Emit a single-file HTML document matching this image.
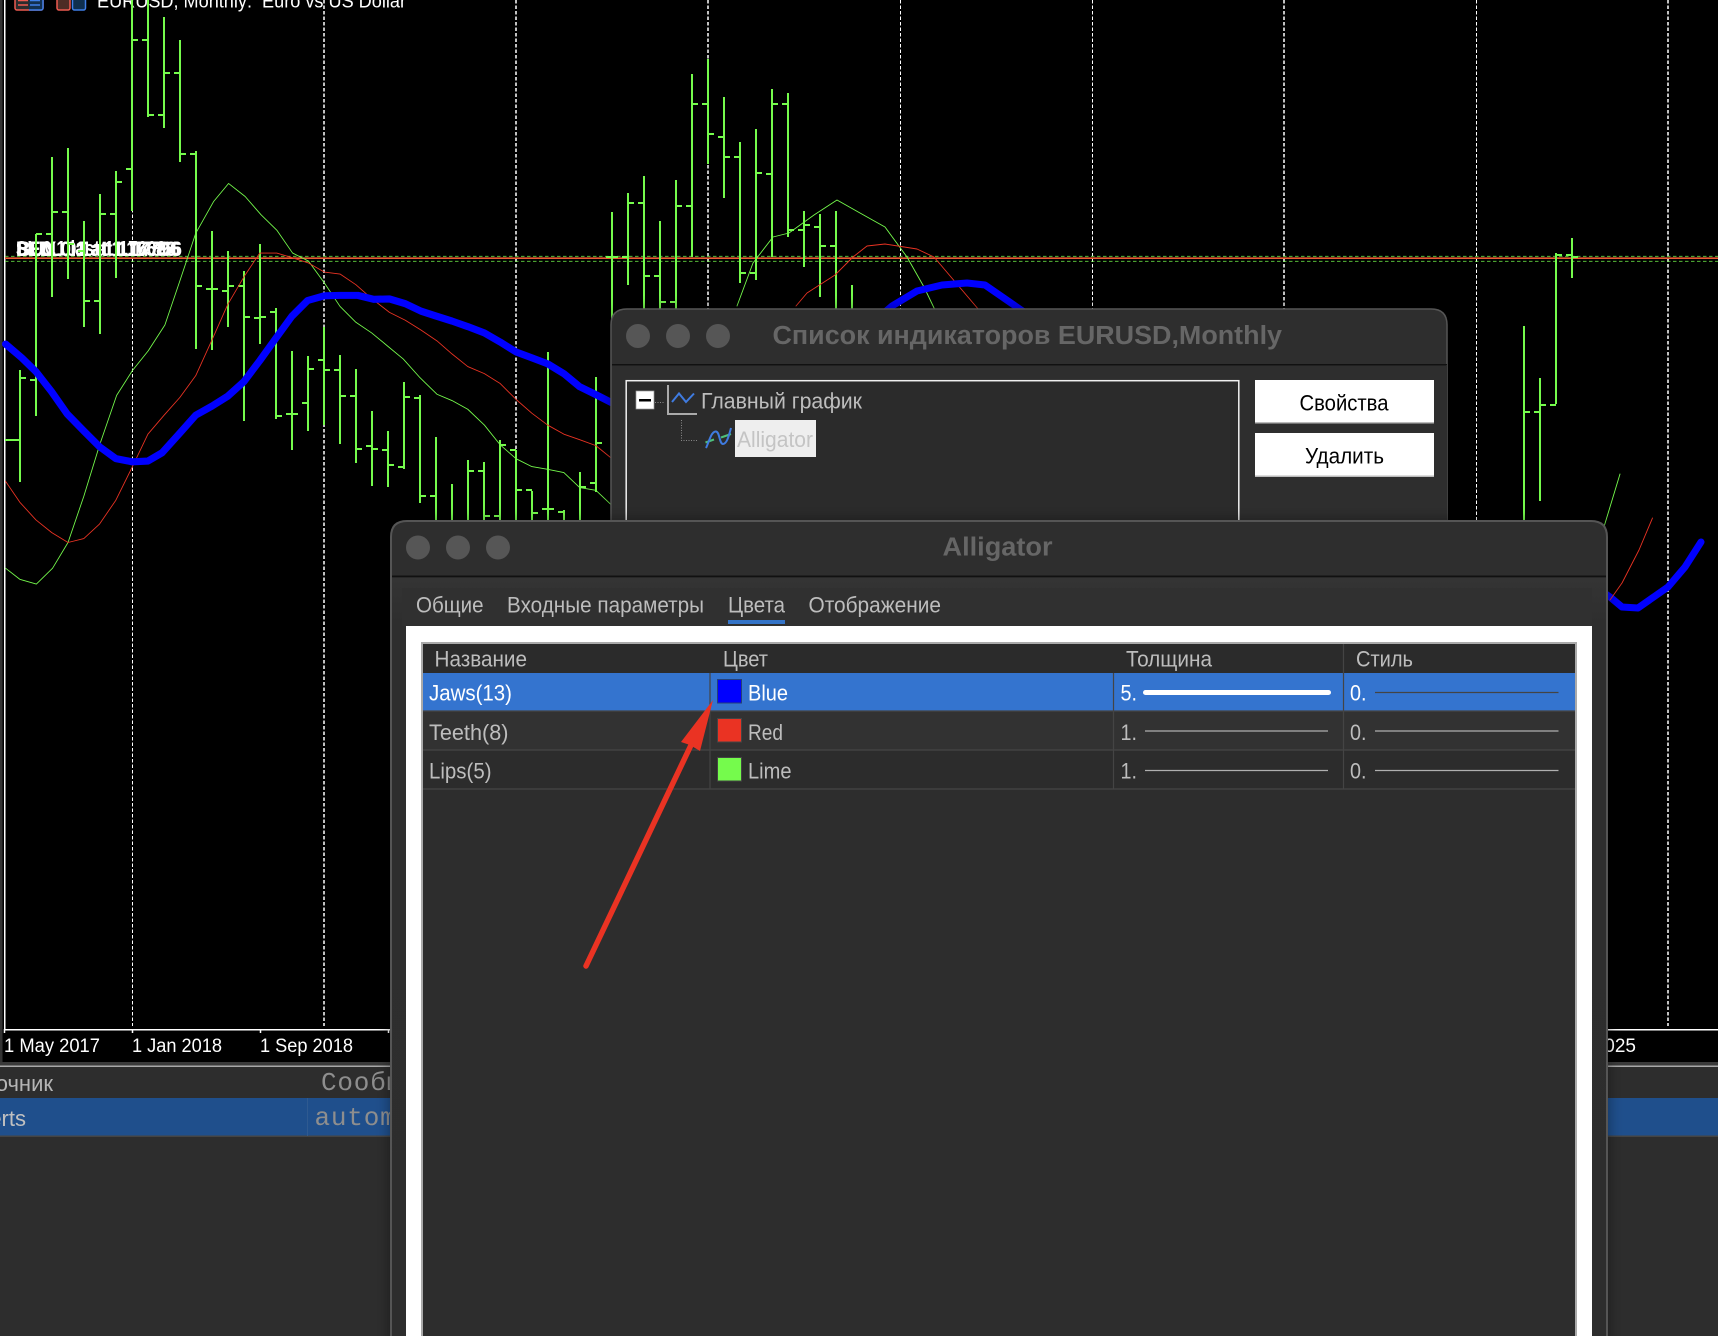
<!DOCTYPE html>
<html><head><meta charset="utf-8"><title>Alligator</title>
<style>
html,body{margin:0;padding:0;background:#000;overflow:hidden;width:1718px;height:1336px}
svg{display:block}
text{font-family:"Liberation Sans",sans-serif;font-size:22px}
.m{font-family:"Liberation Mono",monospace;font-size:26px;fill:#8e8e8e}
.t{font-size:19px;fill:#fff}
.u{fill:#bdbdbd}
.h{font-size:25.5px;font-weight:700;fill:#666}
</style></head><body>
<svg width="1718" height="1336" viewBox="0 0 1718 1336" xmlns="http://www.w3.org/2000/svg">
<defs>
<filter id="sh" x="-5%" y="-5%" width="110%" height="110%"><feDropShadow dx="0" dy="0" stdDeviation="7" flood-color="#000" flood-opacity=".4"/></filter>
<linearGradient id="bd" x1="0" y1="0" x2="0" y2="1"><stop offset="0" stop-color="#343434"/><stop offset=".06" stop-color="#2e2e2e"/><stop offset="1" stop-color="#2d2d2d"/></linearGradient>
</defs>
<rect width="1718" height="1336" fill="#000"/>
<rect x="0" y="0" width="2.5" height="1066" fill="#333"/>
<rect x="4" y="0" width="1.5" height="1030" fill="#fff"/>

<!-- grid -->
<g stroke="#fff" fill="none" stroke-dasharray="3.5 2">
<path d="M132.5 0V1026" stroke-width="1"/>
<path d="M324 0V1026" stroke-width="1.5"/>
<path d="M516 0V1026" stroke-width="1.5"/>
<path d="M708 0V1026" stroke-width="1.5"/>
<path d="M900.5 0V1026" stroke-width="1"/>
<path d="M1092.5 0V1026" stroke-width="1"/>
<path d="M1284 0V1026" stroke-width="1.5"/>
<path d="M1476.5 0V1026" stroke-width="1"/>
<path d="M1668 0V1026" stroke-width="1.5"/>
</g>

<!-- top icons + title -->
<rect x="15" y="-6" width="28" height="16" rx="2" fill="#2c2c2c" stroke="#ee5a50" stroke-width="1.5"/>
<path d="M29 -6H41a2 2 0 0 1 2 2V8a2 2 0 0 1-2 2H29" fill="#123050" stroke="#3f7fe8" stroke-width="1.5"/>
<path d="M18 5H28M18 0.5H28" stroke="#ee5a50" stroke-width="1.5"/><path d="M30 5H40M30 0.5H40" stroke="#3f7fe8" stroke-width="1.5"/>
<rect x="57" y="-6" width="13" height="16" rx="2" fill="#4d2c25" stroke="#ee5a50" stroke-width="1.5"/>
<rect x="72.5" y="-6" width="13" height="16" rx="2" fill="#0f2f4f" stroke="#3f7fe8" stroke-width="1.5"/>
<text class="t" x="97" y="7.5" textLength="309" lengthAdjust="spacingAndGlyphs">EURUSD, Monthly:&#160;&#160;Euro vs US Dollar</text>

<!-- trade labels -->
<g font-weight="700">
<text class="t" x="16" y="256" style="font-size:21px" textLength="166" lengthAdjust="spacingAndGlyphs">SELL 0.1 at 1.17866</text>
<text class="t" x="16" y="256" style="font-size:21px" textLength="160" lengthAdjust="spacingAndGlyphs">BEM 0.1 at 1.17588</text>
<text class="t" x="16" y="255.5" style="font-size:21px" textLength="150" lengthAdjust="spacingAndGlyphs">SL 0.1 last 1.17602</text>
<text class="t" x="17" y="256" style="font-size:21px" textLength="163" lengthAdjust="spacingAndGlyphs">BUY 0.1 at 1.17796</text>
</g>

<!-- order lines -->
<path d="M5 256.3H1718M5 261.3H1718" stroke="#75fb4c" stroke-dasharray="3.5 2.5" stroke-width=".9" opacity=".85"/>
<path d="M5 258.2H1718" stroke="#ea5a33" stroke-width="1.7"/>

<!-- bars -->
<path fill="none" stroke="#75fb4c" stroke-width="2" d="
M20 370V482M5 440H20M20 378H26
M36 234V416M30 380H36M36 234H42
M52 157V297M46 234H52M52 212H58
M68 148V279M62 212H68M68 244H74
M84 221V327M78 251H84M84 301H90
M100 194V334M94 301H100M100 214H106
M116 171V278M110 214H116M116 182H122
M132 -5V211M126 169H132M132 40H138
M148 -5V117M142 40H148M148 115H154
M164 17V128M158 115H164M164 73H170
M180 40V162M174 73H180M180 154H186
M196 151V349M190 154H196M196 286H202
M212 231V350M206 289H212M212 289H218
M228 251V327M222 291H228M228 286H234
M244 271V421M238 286H244M244 317H250
M260 244V344M254 318H260M260 317H266
M276 308V419M270 312H276M276 416H282
M292 351V450M286 414H292M292 414H298
M308 356V431M302 403H308M308 369H314
M324 327V425M318 360H324M324 370H330
M340 355V444M334 370H340M340 396H346
M356 369V463M350 396H356M356 449H362
M372 411V486M366 446H372M372 449H378
M388 431V487M382 450H388M388 465H394
M404 382V469M398 467H404M404 397H410
M420 395V503M414 398H420M420 496H426
M436 437V530M430 496H436
M452 484V530
M468 460V530M468 471H474
M484 462V530M478 471H484M484 516H490
M500 440V530M494 516H500M500 445H506
M516 450V530M510 450H516M516 490H522
M532 491V530M526 490H532M532 513H538
M548 352V530M542 509H548M548 509H554
M564 510V530M558 512H564
M580 472V530M580 487H586
M596 377V492M590 483H596M596 443H602
M612 212V320M606 257H612M612 257H618
M628 193V285M622 257H628M628 203H634
M644 176V320M638 203H644M644 276H650
M660 221V320M654 276H660M660 302H666
M676 180V320M670 302H676M676 206H682
M692 74V257M686 206H692M692 104H698
M708 59V164M702 104H708M708 134H714
M724 97V198M718 137H724M724 157H730
M740 142V283M734 157H740M740 273H746
M756 129V280M750 273H756M756 173H762
M772 89V257M766 174H772M772 104H778
M788 93V237M782 104H788M788 230H794
M804 211V267M798 230H804M804 225H810
M820 214V297M814 227H820M820 246H826
M836 211V320M830 246H836
M852 285V320
M1524 326V530M1524 412H1530
M1540 378V501M1534 412H1540M1540 405H1546
M1556 253V404M1550 405H1556M1556 255H1562
M1572 238V278M1566 255H1572M1572 257H1578"/>

<!-- indicators -->
<g fill="none" stroke-linejoin="round" stroke-linecap="round">
<g transform="scale(.39541)">
<polyline stroke="#75fb4c" stroke-width="2.2" points="14,1437 50,1465 92,1477 133,1437 172,1372 212,1255 252,1125 295,1000 335,937 375,887 417,822 455,710 495,590 540,510 578,464 620,497 660,543 700,582 740,640 780,660 820,715 860,775 900,815 940,842 980,875 1020,908 1062,955 1105,997 1143,1013 1183,1035 1225,1075 1265,1125 1305,1160 1345,1180 1385,1187 1426,1195 1466,1233 1507,1240 1560,1290"/>
<polyline stroke="#ea3323" stroke-width="2.2" points="14,1217 50,1270 91,1315 131,1347 172,1372 212,1362 252,1325 293,1265 335,1180 374,1098 415,1050 455,1005 495,950 536,860 576,770 617,700 657,640 700,640 740,652 780,665 820,688 860,693 900,720 940,755 985,790 1025,810 1065,835 1105,862 1143,895 1183,927 1225,945 1265,970 1305,1010 1345,1045 1385,1075 1426,1098 1466,1112 1507,1127 1560,1170"/>
<polyline stroke="#0000ff" stroke-width="18" points="14,870 55,905 91,940 130,990 170,1047 212,1090 252,1130 293,1160 335,1168 374,1166 410,1145 455,1095 495,1050 536,1027 576,1002 617,965 657,912 698,855 738,800 778,760 820,748 860,747 905,747 945,757 985,756 1025,768 1065,787 1102,799 1143,812 1183,826 1225,842 1265,865 1305,890 1345,905 1385,920 1426,945 1466,978 1507,998 1550,1020"/>
</g>
<polyline stroke="#75fb4c" stroke-width=".9" points="737,306 753,263 773,237 789,233 814,215 837,200 860,213 885,227 907,257 924,287 935,310"/>
<polyline stroke="#ea3323" stroke-width=".9" points="796,306 807,293 835,275 853,257 867,246 885,244 917,249 934,257 979,310"/>
<polyline stroke="#0000ff" stroke-width="7" points="885,312 892,306 917,291 942,285 967,283 985,285 1024,312"/>
<polyline stroke="#75fb4c" stroke-width=".9" points="1600,540 1620,474"/>
<polyline stroke="#0000ff" stroke-width="7" points="1600,590 1610,597 1622,607 1638,608 1668,587 1685,567 1701,542"/>
<polyline stroke="#ea3323" stroke-width=".9" points="1610,600 1622,583 1639,550 1652.5,518"/>
</g>

<!-- time axis -->
<rect x="5" y="1029" width="1713" height="1.5" fill="#fff"/>
<path d="M4.5 1029V1033M132.5 1029V1033M260.5 1029V1033M388.5 1029V1033" stroke="#fff" stroke-width="1.5"/>
<text class="t" x="4" y="1052" textLength="96" lengthAdjust="spacingAndGlyphs">1 May 2017</text>
<text class="t" x="132" y="1052" textLength="90" lengthAdjust="spacingAndGlyphs">1 Jan 2018</text>
<text class="t" x="260" y="1052" textLength="93" lengthAdjust="spacingAndGlyphs">1 Sep 2018</text>
<text class="t" x="1636" y="1052" text-anchor="end">2025</text>

<!-- bottom panel -->
<rect x="0" y="1062" width="1718" height="274" fill="#2d2d2d"/>
<rect x="0" y="1062" width="1718" height="4" fill="#3a3a3a"/>
<rect x="0" y="1065.5" width="1718" height="1.5" fill="#a8a8a8"/>
<rect x="0" y="1098" width="1718" height="38" fill="#1f4f8c"/>
<rect x="0" y="1135.5" width="1718" height="1.5" fill="#444"/>
<rect x="307" y="1098" width="1" height="38" fill="#2f5a90"/>
<text class="u" x="53" y="1091" text-anchor="end" style="fill:#b5b5b5">Источник</text>
<text class="u" x="26" y="1126" text-anchor="end" style="fill:#c0c0c0">Experts</text>
<text class="m" x="321" y="1090" letter-spacing=".8">Сообщение</text>
<text class="m" x="314.5" y="1125" letter-spacing=".8">automated</text>

<!-- window 1 -->
<g filter="url(#sh)">
<path d="M611 560V325Q611 309 627 309H1431Q1447 309 1447 325V560Z" fill="#2d2d2d" stroke="#555" stroke-width="1.5"/>
</g>
<rect x="612" y="364" width="835" height="1.5" fill="#111"/>
<rect x="612" y="366" width="835" height="180" fill="#2e2e2e"/>
<circle cx="638" cy="336" r="12" fill="#565656"/><circle cx="678" cy="336" r="12" fill="#565656"/><circle cx="718" cy="336" r="12" fill="#565656"/>
<text class="h" x="772.5" y="344" textLength="509.5" lengthAdjust="spacingAndGlyphs">Список индикаторов EURUSD,Monthly</text>
<rect x="626.2" y="380.7" width="612.6" height="160" fill="#2b2b2b" stroke="#f0f0f0" stroke-width="1.5"/>
<rect x="636" y="391" width="18" height="18" fill="#fff" stroke="#999" stroke-width=".7"/>
<rect x="639" y="399" width="12" height="2.5" fill="#000"/>
<path d="M655 402.5H664" stroke="#888" stroke-dasharray="1 1.5" fill="none"/>
<path d="M668 385V414H697" fill="none" stroke="#aaa" stroke-width="2"/>
<path d="M672 402L679 393.5L686 402L694 393.5" fill="none" stroke="#3f7be0" stroke-width="2"/>
<text class="u" x="701" y="408.7" textLength="161" lengthAdjust="spacingAndGlyphs">Главный график</text>
<path d="M681.5 420V440.5H698" fill="none" stroke="#888" stroke-dasharray="1 1.5"/>
<path d="M705.5 442.5L714 439.5M721 437.5L731 434" fill="none" stroke="#4ec07a" stroke-width="2"/>
<path d="M706 448C709 442 711 432 715.5 431.5C720 431 719 444 723 444C727 444 729 435 731 428" fill="none" stroke="#3f7be0" stroke-width="2"/>
<rect x="735" y="420" width="81" height="37" fill="#eee"/>
<text x="737" y="447" textLength="76" lengthAdjust="spacingAndGlyphs" fill="#c4c4c4">Alligator</text>
<rect x="1255" y="380" width="179" height="43" fill="#fff"/><rect x="1255" y="422" width="179" height="1.5" fill="#bbb"/>
<rect x="1255" y="433" width="179" height="43" fill="#fff"/><rect x="1255" y="475.5" width="179" height="1.5" fill="#bbb"/>
<text x="1299.5" y="410.5" textLength="89" lengthAdjust="spacingAndGlyphs" fill="#000">Свойства</text>
<text x="1305" y="463.5" textLength="79" lengthAdjust="spacingAndGlyphs" fill="#000">Удалить</text>

<!-- window 2 -->
<g filter="url(#sh)">
<path d="M391 1345V537Q391 521 407 521H1591Q1607 521 1607 537V1345Z" fill="#2d2d2d" stroke="#555" stroke-width="2"/>
</g>
<rect x="392" y="575.5" width="1214" height="1.8" fill="#111"/>
<rect x="392" y="577.5" width="1214" height="760" fill="url(#bd)"/>
<rect x="402" y="588" width="1190" height="38" fill="#303030"/>
<circle cx="418" cy="547.5" r="12" fill="#565656"/><circle cx="458" cy="547.5" r="12" fill="#565656"/><circle cx="498" cy="547.5" r="12" fill="#565656"/>
<text class="h" x="942.5" y="555.5" textLength="110" lengthAdjust="spacingAndGlyphs">Alligator</text>
<text class="u" x="416" y="612.5" textLength="67.5" lengthAdjust="spacingAndGlyphs">Общие</text>
<text class="u" x="507" y="612.5" textLength="197" lengthAdjust="spacingAndGlyphs">Входные параметры</text>
<text class="u" x="728" y="612.5" textLength="57" lengthAdjust="spacingAndGlyphs">Цвета</text>
<text class="u" x="808.5" y="612.5" textLength="132.5" lengthAdjust="spacingAndGlyphs">Отображение</text>
<rect x="728" y="620" width="57" height="4" fill="#3474c8"/>
<rect x="406" y="626" width="1186" height="710" fill="#fff"/>

<!-- table -->
<rect x="421" y="642" width="1156" height="694" fill="#aaa"/>
<rect x="423" y="644" width="1152" height="692" fill="#2d2d2d"/>
<rect x="423" y="644" width="1152" height="29" fill="#2b2b2b"/>
<rect x="423" y="673" width="1152" height="38" fill="#3474cf"/>
<rect x="423" y="711" width="1152" height="39" fill="#323232"/>
<rect x="423" y="750" width="1152" height="39" fill="#2c2c2c"/>
<path d="M423 711H1575M423 750H1575M423 789H1575" stroke="#454545" stroke-width="1.2"/>
<path d="M710 673V789M1113.5 673V789M1343.5 644V789" stroke="#444" stroke-width="1.2"/>
<text class="u" x="434.5" y="666.5" textLength="92.5" lengthAdjust="spacingAndGlyphs">Название</text>
<text class="u" x="723" y="666.5" textLength="45" lengthAdjust="spacingAndGlyphs">Цвет</text>
<text class="u" x="1126" y="666.5" textLength="86" lengthAdjust="spacingAndGlyphs">Толщина</text>
<text class="u" x="1356" y="666.5" textLength="57" lengthAdjust="spacingAndGlyphs">Стиль</text>

<text x="429" y="700.5" fill="#fff" textLength="83" lengthAdjust="spacingAndGlyphs">Jaws(13)</text>
<text class="u" x="429" y="740" textLength="79.5" lengthAdjust="spacingAndGlyphs">Teeth(8)</text>
<text class="u" x="429" y="778.5" textLength="62.5" lengthAdjust="spacingAndGlyphs">Lips(5)</text>

<rect x="717.5" y="679.5" width="24" height="23.5" fill="#0000ff" stroke="#24417a"/>
<rect x="717.5" y="718.5" width="24" height="23.5" fill="#ea3323" stroke="#444"/>
<rect x="717.5" y="757.5" width="24" height="23.5" fill="#75fb4c" stroke="#444"/>
<text x="748" y="700.5" fill="#fff" textLength="40" lengthAdjust="spacingAndGlyphs">Blue</text>
<text class="u" x="748" y="740" textLength="35" lengthAdjust="spacingAndGlyphs">Red</text>
<text class="u" x="748" y="778.5" textLength="43.5" lengthAdjust="spacingAndGlyphs">Lime</text>

<text x="1120.5" y="700.5" fill="#fff" textLength="16.5" lengthAdjust="spacingAndGlyphs">5.</text>
<text class="u" x="1120.5" y="740" textLength="16.5" lengthAdjust="spacingAndGlyphs">1.</text>
<text class="u" x="1120.5" y="778.5" textLength="16.5" lengthAdjust="spacingAndGlyphs">1.</text>
<text x="1350" y="700.5" fill="#fff" textLength="16.5" lengthAdjust="spacingAndGlyphs">0.</text>
<text class="u" x="1350" y="740" textLength="16.5" lengthAdjust="spacingAndGlyphs">0.</text>
<text class="u" x="1350" y="778.5" textLength="16.5" lengthAdjust="spacingAndGlyphs">0.</text>
<path d="M1145.5 692.5H1328.5" stroke="#fff" stroke-width="5" stroke-linecap="round"/>
<path d="M1145 731H1328M1145 770.5H1328M1375 731H1558.5M1375 770.5H1558.5" stroke="#b0b0b0" stroke-width="1.2"/>
<path d="M1375 692.5H1558.5" stroke="#444" stroke-width="1.2"/>

<!-- arrow -->
<path d="M586 966L692 743" stroke="#ea3323" stroke-width="5.5" stroke-linecap="round"/>
<path d="M713 700L681 742L690 745L700 751Z" fill="#ea3323"/>
</svg>
</body></html>
